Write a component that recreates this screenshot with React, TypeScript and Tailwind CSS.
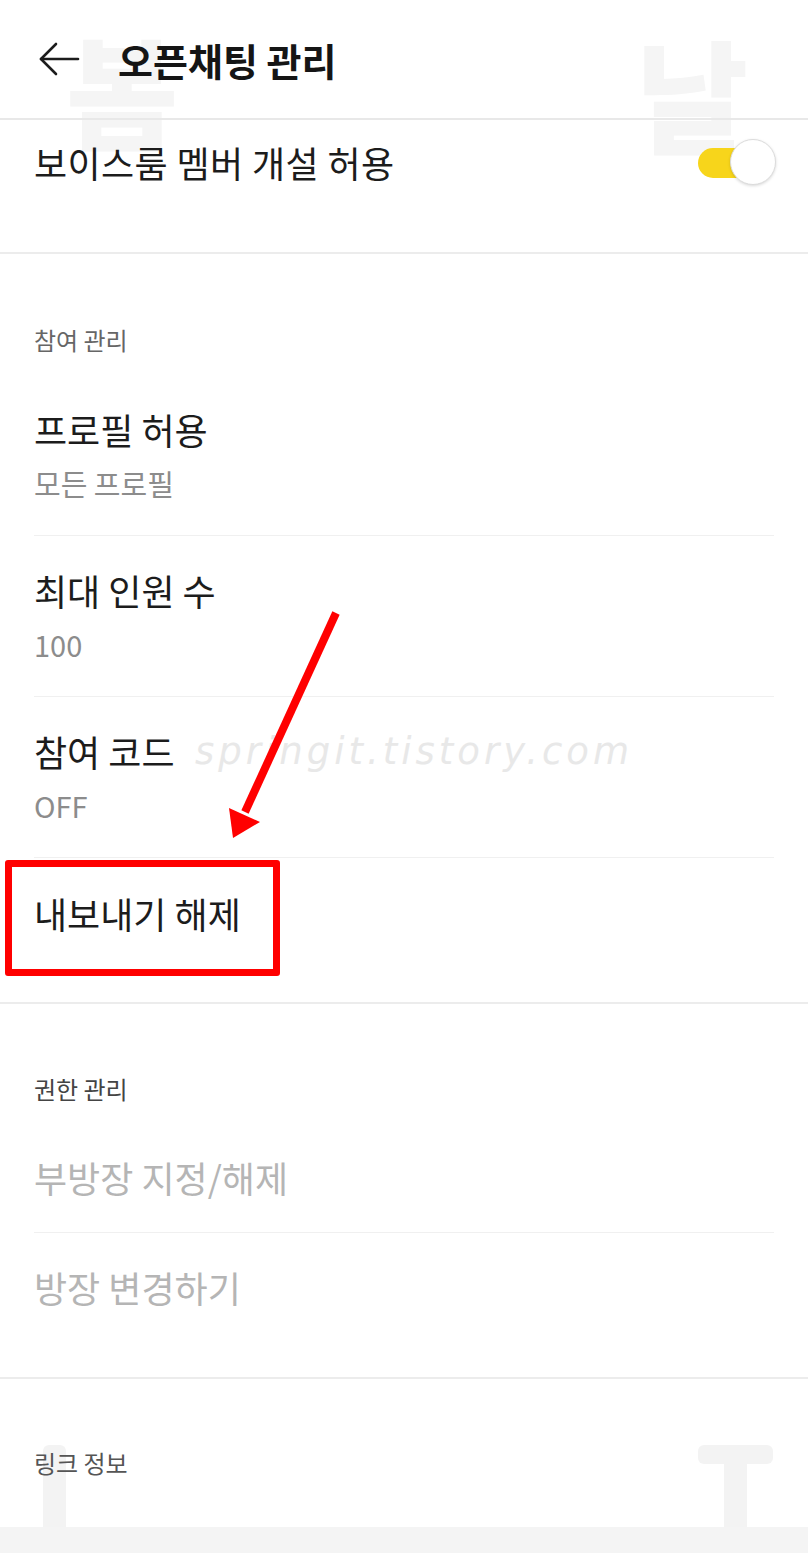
import { ReactNode } from "react";

const font = { fontFamily: "'Noto Sans CJK KR', 'Noto Sans', sans-serif" };

function Line({ children, className }: { children: ReactNode; className: string }) {
  return <div className={`flex items-center px-[34px] whitespace-nowrap ${className}`}>{children}</div>;
}

function Divider() {
  return <div className="mx-[34px] h-px bg-[#f0f0f0]" />;
}

function SectionBreak() {
  return <div className="h-[2px] bg-[#ececec]" />;
}

function Item({ title, value, first }: { title: string; value: string; first?: boolean }) {
  return (
    <div className="flex flex-col">
      <Line className={`h-10 text-[36px] text-[#1c1c1c] ${first ? "mt-[53px]" : "mt-[34px]"}`}>{title}</Line>
      <Line className="mt-[17px] h-9 text-[29px] text-[#8c8c8c]">{value}</Line>
      <div className="h-[33px]" />
      <Divider />
    </div>
  );
}

export default function App() {
  return (
    <div className="relative h-[1553px] w-[808px] overflow-hidden bg-white" style={font}>
      {/* faint blog watermarks, drawn under the page content */}
      <div className="pointer-events-none absolute left-[66px] top-[26px] text-[122px] font-black leading-none text-[#f5f5f5]">봄</div>
      <div className="pointer-events-none absolute left-[636px] top-[30px] text-[122px] font-black leading-none text-[#f5f5f5]">날</div>
      <div className="pointer-events-none absolute left-[43px] top-[1445px] h-[88px] w-[23px] rounded-t-md bg-[#f3f3f3]" />
      <div className="pointer-events-none absolute left-[698px] top-[1445px] h-[19px] w-[75px] rounded-md bg-[#f3f3f3]" />
      <div className="pointer-events-none absolute left-[724px] top-[1460px] h-[73px] w-[23px] bg-[#f3f3f3]" />
      <div
        className="pointer-events-none absolute left-[195px] top-[724px] text-[37px] font-extralight italic tracking-[4px] text-[#e8e8e8]"
        style={{ fontFamily: "'DejaVu Sans', sans-serif" }}
      >
        springit.tistory.com
      </div>

      <div className="relative flex flex-col">
        <header className="flex h-[120px] items-center border-b-2 border-[#e8e8e8]">
          <svg className="ml-[38px]" width="42" height="36" viewBox="0 0 42 36" fill="none" stroke="#1c1c1c" strokeWidth="2.6" strokeLinecap="round" strokeLinejoin="round">
            <path d="M40 18H3" />
            <path d="M18 3L3 18l15 15" />
          </svg>
          <h1 className="ml-[38px] text-[38px] font-bold text-[#151515]">오픈채팅 관리</h1>
        </header>

        <div className="flex h-[84px] items-center justify-between px-[34px]">
          <span className="text-[36px] tracking-[0.4px] text-[#1c1c1c]">보이스룸 멤버 개설 허용</span>
          <div className="relative mr-[-2px] h-[46px] w-[78px]">
            <div className="absolute left-0 top-[9px] h-[30px] w-[60px] rounded-full bg-[#f7d51b]" />
            <div className="absolute right-0 top-0 h-[46px] w-[46px] rounded-full border border-[#dcdcdc] bg-white shadow-[0_1px_3px_rgba(0,0,0,0.15)]" />
          </div>
        </div>
        <div className="h-[48px]" />
        <SectionBreak />

        <Line className="mt-[70px] h-8 text-[24px] text-[#666]">참여 관리</Line>
        <Item first title="프로필 허용" value="모든 프로필" />
        <Item title="최대 인원 수" value="100" />
        <Item title="참여 코드" value="OFF" />
        <Line className="mt-[35px] h-10 text-[36px] text-[#1c1c1c]">내보내기 해제</Line>
        <div className="h-[69px]" />
        <SectionBreak />

        <Line className="mt-[69px] h-8 text-[24px] text-[#444]">권한 관리</Line>
        <Line className="mt-[52px] h-10 text-[36px] text-[#b5b5b5]">부방장 지정/해제</Line>
        <div className="h-[35px]" />
        <Divider />
        <Line className="mt-[34px] h-10 text-[36px] text-[#b5b5b5]">방장 변경하기</Line>
        <div className="h-[70px]" />
        <SectionBreak />

        <Line className="mt-[68px] h-8 text-[24px] text-[#555]">링크 정보</Line>
        <div className="mt-[48px] h-[30px] bg-[#f4f4f4]" />
      </div>

      {/* annotation: red box + arrow */}
      <div className="absolute left-[5px] top-[860px] h-[116px] w-[275px] rounded-[3px] border-[7px] border-[#ff0000]" />
      <svg className="absolute left-0 top-0" width="808" height="1553" viewBox="0 0 808 1553">
        <line x1="336" y1="613" x2="245" y2="812" stroke="#ff0000" strokeWidth="8" />
        <polygon points="233,838 229,808 260,822" fill="#ff0000" />
      </svg>
    </div>
  );
}
